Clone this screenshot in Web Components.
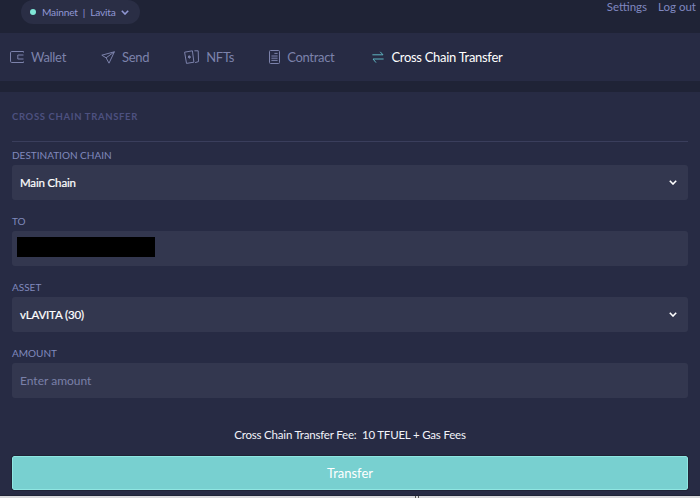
<!DOCTYPE html>
<html>
<head>
<meta charset="utf-8">
<style>
  html, body { margin: 0; height: 100%; overflow: hidden; background: #272b44; }
  body { font-family: "Lato", "Liberation Sans", sans-serif; }
  app-shell { height: 498px; }
  nav-tab[icon="contract"] { margin-right: 3px; }
</style>
</head>
<body>
<app-shell>
  <top-bar slot="top"></top-bar>
  <nav-tabs slot="nav">
    <nav-tab label="Wallet" icon="wallet"></nav-tab>
    <nav-tab label="Send" icon="send"></nav-tab>
    <nav-tab label="NFTs" icon="nfts"></nav-tab>
    <nav-tab label="Contract" icon="contract"></nav-tab>
    <nav-tab label="Cross Chain Transfer" icon="swap" active></nav-tab>
  </nav-tabs>
  <transfer-form>
    <form-field label="Destination Chain"><field-box value="Main Chain" select></field-box></form-field>
    <form-field label="To"><field-box redacted></field-box></form-field>
    <form-field label="Asset"><field-box value="vLAVITA (30)" select></field-box></form-field>
    <form-field label="Amount"><field-box placeholder="Enter amount"></field-box></form-field>
  </transfer-form>
</app-shell>

<script>
const chevron = `<svg width="8" height="5" viewBox="0 0 8 5" fill="none" stroke="currentColor" stroke-width="1.6"><path d="M.8.8 4 4 7.2.8"/></svg>`;

const icons = {
  wallet: `<svg width="14" height="12" viewBox="0 0 14 12" fill="none" stroke="currentColor" stroke-width="1"><path d="M13.5 1.5V.5H1.8A1.3 1.3 0 0 0 .5 1.8v8.4a1.3 1.3 0 0 0 1.3 1.3h11.7v-1"/><path d="M13.5 4H7.8v4h5.7"/></svg>`,
  send: `<svg width="14" height="13" viewBox="0 0 14 13" fill="none" stroke="currentColor" stroke-width="1" stroke-linejoin="round"><path d="M13.4.8.8 4.2l4.3 2.6L8 12.2z"/><path d="M13.4.8 5.1 6.8"/></svg>`,
  nfts: `<svg width="15" height="14" viewBox="0 0 15 14" fill="none" stroke="currentColor" stroke-width="1"><path d="M.6 2.2 8.4.8l1.5 11.4-7.4 1.2z"/><path d="M10.4.8h3.8l.3 10.8-3.4 1"/><path d="M5.2 5.6l1.3 1.4-1 1.3-1.4-1.2z" fill="currentColor"/></svg>`,
  contract: `<svg width="11" height="14" viewBox="0 0 11 14" fill="none" stroke="currentColor" stroke-width="1"><rect x=".5" y=".5" width="10" height="13" rx="1"/><path d="M2.4 6h6.2M2.4 8.2h6.2M2.4 10.4h6.2M5.4 3.4h3.2"/></svg>`,
  swap: `<svg width="12" height="13" viewBox="0 0 12 13" fill="none" stroke="currentColor" stroke-width="1"><path d="M.4 3.8h10.6L8.2.8"/><path d="M11.6 8H1l3 3.6"/></svg>`
};

class AppShell extends HTMLElement {
  constructor() {
    super();
    this.attachShadow({ mode: 'open' });
    this.shadowRoot.innerHTML = `
      <style>
        :host { display: flex; flex-direction: column; background: #1f2336; overflow: hidden; }
        ::slotted(*) { flex: none; }
        .strip { position: relative; flex: 1; border-top: 1px solid #1f2336; background: #d9dadd; }
        .mark { position: absolute; left: 415px; top: 0; width: 2px; height: 2px; border: solid #555; border-width: 0 1px; }
      </style>
      <slot name="top"></slot>
      <slot name="nav"></slot>
      <slot></slot>
      <div class="strip"><span class="mark"></span></div>
    `;
  }
}

class TopBar extends HTMLElement {
  constructor() {
    super();
    this.attachShadow({ mode: 'open' });
    this.shadowRoot.innerHTML = `
      <style>
        :host { display: flex; justify-content: space-between; height: 33px; background: #1f2336; font-size: 11.5px; color: #8087c0; }
        .pill { display: flex; align-items: center; height: 24px; margin-left: 21px; padding: 0 11px 0 9px; border-radius: 12px; background: #2a2e45; color: #9097d4; font-size: 10.2px; letter-spacing: -.2px; }
        .dot { width: 6px; height: 6px; border-radius: 50%; background: #7fe6d6; margin-right: 6px; }
        .sep { margin: 0 5px; }
        svg { margin-left: 5px; }
        .links { display: flex; gap: 11px; padding-right: 4px; line-height: 13px; }
      </style>
      <div class="pill"><span class="dot"></span><span>Mainnet</span><span class="sep">|</span><span>Lavita</span>${chevron}</div>
      <div class="links"><span>Settings</span><span>Log out</span></div>
    `;
  }
}

class NavTabs extends HTMLElement {
  constructor() {
    super();
    this.attachShadow({ mode: 'open' });
    this.shadowRoot.innerHTML = `
      <style>
        :host { display: flex; align-items: center; gap: 35px; height: 48px; padding-left: 10px; background: #272b44; }
      </style>
      <slot></slot>
    `;
  }
}

class NavTab extends HTMLElement {
  constructor() {
    super();
    this.attachShadow({ mode: 'open' });
    const active = this.hasAttribute('active');
    this.shadowRoot.innerHTML = `
      <style>
        :host { display: flex; align-items: center; gap: 7px; font-size: 13px; letter-spacing: -.3px; color: ${active ? '#fff' : '#7c82ab'}; }
        .icon { display: flex; color: ${active ? '#5fb4c0' : '#7c82ab'}; }
      </style>
      <span class="icon">${icons[this.getAttribute('icon')]}</span>
      <span>${this.getAttribute('label')}</span>
    `;
  }
}

class TransferForm extends HTMLElement {
  constructor() {
    super();
    this.attachShadow({ mode: 'open' });
    this.shadowRoot.innerHTML = `
      <style>
        :host { display: flex; flex-direction: column; margin-top: 11px; padding: 0 12px 5px; background: #272b44; }
        h2 { margin: 0; padding: 19px 0 18px; border-bottom: 1px solid #3a3e5c; font-size: 9.5px; line-height: 12px; font-weight: 700; letter-spacing: .65px; text-transform: uppercase; color: #4d5180; }
        .fields { display: flex; flex-direction: column; gap: 14px; padding-top: 6px; }
        .fee { margin: 30px 0 14px; text-align: center; font-size: 11.5px; line-height: 14px; letter-spacing: -.2px; color: #f2f3fa; white-space: pre; }
        button { height: 34px; padding: 0; border: 1px solid #8fe6e2; border-radius: 2px; outline: 1px solid #1f2336; background: #78d0d0; color: #fff; font: inherit; font-size: 13px; }
      </style>
      <h2>Cross Chain Transfer</h2>
      <div class="fields"><slot></slot></div>
      <div class="fee">Cross Chain Transfer Fee:  10 TFUEL + Gas Fees</div>
      <button>Transfer</button>
    `;
  }
}

class FormField extends HTMLElement {
  constructor() {
    super();
    this.attachShadow({ mode: 'open' });
    this.shadowRoot.innerHTML = `
      <style>
        :host { display: flex; flex-direction: column; gap: 3px; }
        label { font-size: 10px; line-height: 14px; text-transform: uppercase; color: #8089bd; }
      </style>
      <label>${this.getAttribute('label')}</label>
      <slot></slot>
    `;
  }
}

class FieldBox extends HTMLElement {
  constructor() {
    super();
    this.attachShadow({ mode: 'open' });
    const value = this.getAttribute('value');
    const placeholder = this.getAttribute('placeholder');
    let inner = '';
    if (this.hasAttribute('redacted')) inner = '<span class="redact"></span>';
    else if (value) inner = `<span class="value">${value}</span>`;
    else if (placeholder) inner = `<span class="placeholder">${placeholder}</span>`;
    this.shadowRoot.innerHTML = `
      <style>
        :host { display: flex; align-items: center; justify-content: space-between; height: 35px; padding: 0 11px 0 8px; border-radius: 3px; background: #33374f; font-size: 12px; }
        .value { color: #fff; font-size: 11.5px; letter-spacing: -.15px; -webkit-text-stroke: .2px #fff; }
        .placeholder { color: #7a80a8; }
        .redact { width: 138px; height: 20px; margin: 0 0 4px -3px; background: #000; }
        svg { color: #fff; }
      </style>
      ${inner}
      ${this.hasAttribute('select') ? chevron : ''}
    `;
  }
}

customElements.define('app-shell', AppShell);
customElements.define('top-bar', TopBar);
customElements.define('nav-tabs', NavTabs);
customElements.define('nav-tab', NavTab);
customElements.define('transfer-form', TransferForm);
customElements.define('form-field', FormField);
customElements.define('field-box', FieldBox);
</script>
</body>
</html>
